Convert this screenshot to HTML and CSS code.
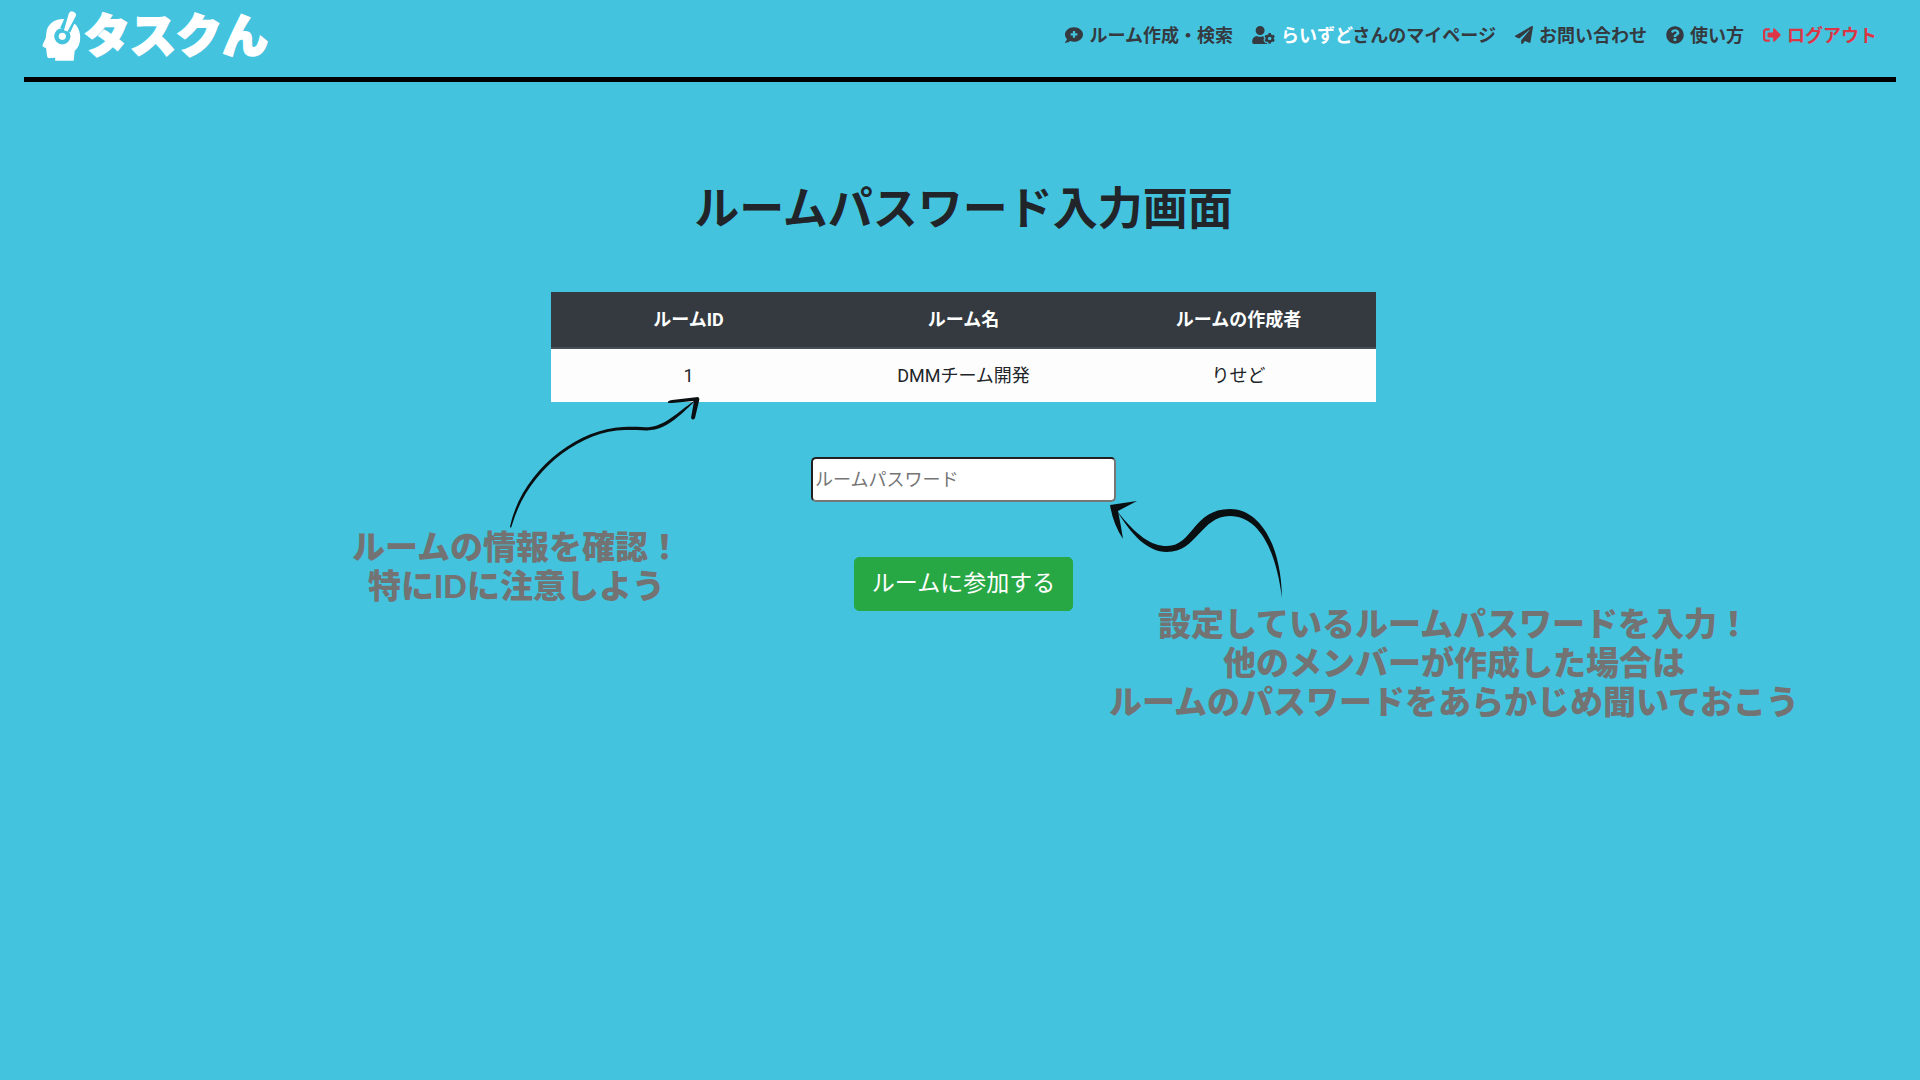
FILE: index.html
```html
<!DOCTYPE html>
<html lang="ja">
<head>
<meta charset="utf-8">
<meta name="viewport" content="width=device-width, initial-scale=1">
<title>タスくん</title>
<link rel="stylesheet" href="styles.css">
</head>
<body>
<header class="header">
  <a class="logo" href="#">
    <svg class="logo-mark" viewBox="126 30 120 160" aria-hidden="true">
      <path fill="#fff" d="M190 58C160 58 140 76 138 100L136 116L126 138Q125 143 132 145L137 147L140 172Q141 179 150 178L165 177V186H222L225 156Q243 140 242 112Q241 92 229 75Z"/>
      <circle class="logo-gap" cx="187" cy="111" r="25"/>
      <path class="logo-slit" d="M218 44L196 92"/>
      <circle cx="187" cy="111" r="11" fill="#fff"/>
      <path fill="#fff" d="M207 41Q211 31 221 35Q231 39 229 48L203 96L192 92Z"/>
    </svg>
    <span class="logo-text">タスクん</span>
  </a>
  <nav class="nav">
    <a class="nav-link" href="#">
      <svg class="icon" viewBox="0 0 512 512" aria-hidden="true"><path fill-rule="evenodd" d="M256 32C114.600 32 0 125.100 0 240c0 49.600 21.400 95 57 130.700C44.500 421.100 2.700 466 2.200 466.500c-2.200 2.300-2.800 5.700-1.500 8.700S4.800 480 8 480c66.300 0 116-31.800 140.600-51.400 32.700 12.300 69 19.400 107.400 19.400 141.400 0 256-93.100 256-208S397.400 32 256 32zM232 144h48q8 0 8 8v56h56q8 0 8 8v48q0 8-8 8h-56v56q0 8-8 8h-48q-8 0-8-8v-56h-56q-8 0-8-8v-48q0-8 8-8h56v-56q0-8 8-8z"/></svg>
      <span>ルーム作成・検索</span>
    </a>
    <a class="nav-link" href="#">
      <svg class="icon icon-wide" viewBox="0 0 640 512" aria-hidden="true"><path d="M610.500 373.300c2.600-14.100 2.600-28.500 0-42.600l25.800-14.900c3-1.700 4.300-5.200 3.300-8.500-6.700-21.600-18.200-41.200-33.200-57.400-2.300-2.500-6-3.100-9-1.400l-25.800 14.900c-10.900-9.300-23.400-16.500-36.900-21.300v-29.800c0-3.400-2.400-6.400-5.700-7.100-22.300-5-45-4.800-66.200 0-3.300.7-5.700 3.700-5.700 7.100v29.800c-13.500 4.800-26 12-36.900 21.300l-25.800-14.900c-2.900-1.700-6.700-1.100-9 1.400-15 16.200-26.500 35.800-33.200 57.400-1 3.300.4 6.800 3.300 8.500l25.800 14.900c-2.600 14.100-2.600 28.500 0 42.600l-25.800 14.900c-3 1.700-4.300 5.200-3.300 8.500 6.700 21.600 18.200 41.100 33.200 57.400 2.300 2.500 6 3.100 9 1.400l25.800-14.900c10.900 9.300 23.400 16.500 36.900 21.300v29.800c0 3.400 2.400 6.400 5.700 7.100 22.300 5 45 4.800 66.200 0 3.300-.7 5.700-3.700 5.700-7.100v-29.800c13.500-4.800 26-12 36.900-21.300l25.800 14.900c2.900 1.700 6.700 1.100 9-1.400 15-16.200 26.500-35.800 33.200-57.400 1-3.300-.4-6.800-3.300-8.500l-25.800-14.900zM496 400.500c-26.800 0-48.500-21.800-48.500-48.500s21.800-48.500 48.500-48.500 48.500 21.800 48.500 48.500-21.700 48.500-48.500 48.500zM224 256c70.700 0 128-57.300 128-128S294.700 0 224 0 96 57.300 96 128s57.300 128 128 128zm201.200 226.500c-2.300-1.200-4.600-2.600-6.800-3.900l-7.900 4.600c-6 3.400-12.800 5.300-19.600 5.300-10.900 0-21.400-4.600-28.900-12.600-18.300-19.800-32.300-43.900-40.200-69.600-5.500-17.700 1.900-36.400 17.900-45.700l7.900-4.600c-.1-2.600-.1-5.200 0-7.800l-7.900-4.600c-16-9.200-23.400-28-17.900-45.700.9-2.900 2.200-5.800 3.200-8.700-3.800-.3-7.500-1.200-11.400-1.200h-16.700c-22.200 10.200-46.900 16-72.900 16s-50.600-5.800-72.900-16h-16.700C60.200 288 0 348.200 0 422.400V464c0 26.500 21.500 48 48 48h352c10.100 0 19.500-3.200 27.200-8.500-1.200-3.800-2-7.700-2-11.800v-9.200z"/></svg>
      <span><span class="user-name">らいずど</span>さんのマイページ</span>
    </a>
    <a class="nav-link" href="#">
      <svg class="icon" viewBox="0 0 512 512" aria-hidden="true"><path d="M476 3.200L12.500 270.600c-18.100 10.400-15.800 35.600 2.200 43.200L121 358.400l287.300-253.200c5.500-4.900 13.300 2.600 8.600 8.300L176 407v80.500c0 23.600 28.500 32.900 42.500 15.800L282 426l124.600 52.200c14.200 6 30.400-2.900 33-18.200l72-432C515 7.800 493.300-6.800 476 3.200z"/></svg>
      <span>お問い合わせ</span>
    </a>
    <a class="nav-link" href="#">
      <svg class="icon" viewBox="0 0 512 512" aria-hidden="true"><path d="M504 256c0 136.997-111.043 248-248 248S8 392.997 8 256C8 119.083 119.043 8 256 8s248 111.083 248 248zM262.655 90c-54.497 0-89.255 22.957-116.549 63.758-3.536 5.286-2.353 12.415 2.715 16.258l34.699 26.310c5.205 3.947 12.621 3.008 16.665-2.122 17.864-22.658 30.113-35.797 57.303-35.797 20.429 0 45.698 13.148 45.698 32.958 0 14.976-12.363 22.667-32.534 33.976C247.128 238.528 216 254.941 216 296v4c0 6.627 5.373 12 12 12h56c6.627 0 12-5.373 12-12v-1.333c0-28.462 83.186-29.647 83.186-106.667 0-58.002-60.165-102-116.531-102zM256 338c-25.365 0-46 20.635-46 46 0 25.364 20.635 46 46 46s46-20.636 46-46c0-25.365-20.635-46-46-46z"/></svg>
      <span>使い方</span>
    </a>
    <a class="nav-link nav-link-logout" href="#">
      <svg class="icon" viewBox="0 0 512 512" aria-hidden="true"><path d="M497 273L329 441c-15 15-41 4.500-41-17v-96H152c-13.300 0-24-10.700-24-24v-96c0-13.300 10.700-24 24-24h136V88c0-21.400 25.900-32 41-17l168 168c9.300 9.400 9.300 24.600 0 34zM192 436v-40c0-6.600-5.400-12-12-12H96c-17.700 0-32-14.300-32-32V160c0-17.700 14.300-32 32-32h84c6.600 0 12-5.400 12-12V76c0-6.600-5.400-12-12-12H96c-53 0-96 43-96 96v192c0 53 43 96 96 96h84c6.600 0 12-5.400 12-12z"/></svg>
      <span>ログアウト</span>
    </a>
  </nav>
</header>

<main class="main">
  <h1 class="title">ルームパスワード入力画面</h1>
  <div class="room">
    <table class="room-table">
      <thead>
        <tr><th scope="col">ルームID</th><th scope="col">ルーム名</th><th scope="col">ルームの作成者</th></tr>
      </thead>
      <tbody>
        <tr><td>1</td><td>DMMチーム開発</td><td>りせど</td></tr>
      </tbody>
    </table>
    <form class="room-form">
      <input class="password" type="password" placeholder="ルームパスワード" aria-label="ルームパスワード">
      <button class="join" type="button">ルームに参加する</button>
    </form>

    <div class="callout callout-info">
      <svg class="arrow arrow-info" viewBox="0 0 200 133" aria-hidden="true">
        <path d="M5 132C16 78 70 34 118 32C134 31 142 33 145 32C162 30 176 14 192 4C178 18 162 34 146 35C142 36 134 35 120 35C72 36 22 78 7 130Q6 134 5 132Z"/>
        <path d="M163 8Q162 6 167 5L193 2Q195 3 194 6L190 23Q188 26 186 23L189 6L167 8Z"/>
      </svg>
      <p class="callout-text">ルームの情報を確認！<br>特にIDに注意しよう</p>
    </div>

    <div class="callout callout-password">
      <svg class="arrow arrow-password" viewBox="0 0 180 107" aria-hidden="true">
        <path d="M8 13C28 38 42 48 58 48C84 48 84 11 121 11C150 11 172 45 173 100C167 52 150 18 121 18C92 18 88 54 58 54C38 54 22 36 8 13Z"/>
        <path d="M1 7L28 3L9 13Q12 28 14 41Q4 26 1 7Z"/>
      </svg>
      <p class="callout-text">設定しているルームパスワードを入力！<br>他のメンバーが作成した場合は<br>ルームのパスワードをあらかじめ聞いておこう</p>
    </div>
  </div>
</main>
</body>
</html>
```
FILE: styles.css
```css
:root {
  --page: #44c3df;
  --ink: #212529;
  --dark: #343a40;
}

* {
  box-sizing: border-box;
}

body {
  display: flex;
  flex-direction: column;
  min-height: 100vh;
  margin: 0;
  background: var(--page);
  color: var(--ink);
  font-family: Roboto, "Noto Sans CJK JP", sans-serif;
  font-size: 18px;
  line-height: 27px;
}

.header {
  display: flex;
  align-items: center;
  justify-content: space-between;
  margin: 0 24px;
  padding: 10px 19px 15px 18px;
  border-bottom: 5px solid #000;
}

.logo {
  display: flex;
  align-items: center;
  gap: 2px;
  color: #fff;
  text-decoration: none;
}

.logo-mark {
  width: 40px;
  height: 52px;
}

.logo-gap {
  fill: var(--page);
}

.logo-slit {
  stroke: var(--page);
  stroke-width: 34px;
}

.logo-text {
  font-size: 46px;
  font-weight: 900;
  line-height: 52px;
  -webkit-text-stroke: 2px #fff;
  stroke-linejoin: round;
}

.nav {
  display: flex;
  gap: 19px;
  padding-bottom: 2px;
}

.nav-link {
  display: flex;
  align-items: center;
  gap: 6px;
  color: var(--dark);
  font-weight: 700;
  text-decoration: none;
  white-space: nowrap;
}

.nav-link-logout {
  color: #dc3545;
}

.user-name {
  color: #fff;
}

.icon {
  width: 18px;
  height: 18px;
  fill: currentColor;
}

.icon-wide {
  width: 23px;
}

.main {
  display: flex;
  flex: 1;
  flex-direction: column;
  align-items: center;
  padding: 101px 0 80px 7px;
}

.title {
  margin: 0 0 55px;
  font-size: 45px;
  font-weight: 700;
  line-height: 54px;
}

.room {
  position: relative;
  width: 100%;
  max-width: 825px;
}

.room-table {
  width: 100%;
  table-layout: fixed;
  border-collapse: collapse;
  text-align: center;
  background: #fdfdfd;
}

.room-table th {
  padding: 14px;
  background: var(--dark);
  border-bottom: 2px solid #454d55;
  color: #fff;
  font-weight: 700;
}

.room-table td {
  padding: 13px;
}

.room-form {
  display: flex;
  flex-direction: column;
  align-items: center;
  gap: 55px;
  padding-top: 55px;
}

.password {
  width: 305px;
  height: 45px;
  padding: 1px 2px;
  background: #fff;
  border: 2px inset #767676;
  border-radius: 5px;
  font: inherit;
}

.password::placeholder {
  color: #757575;
}

.join {
  padding: 10px 17px;
  background: #28a745;
  border: 1px solid #28a745;
  border-radius: 5px;
  color: #fff;
  font-family: inherit;
  font-size: 23px;
  line-height: 32px;
}

.callout {
  position: absolute;
  display: flex;
  flex-direction: column;
  align-items: flex-start;
}

.callout-info {
  top: 103px;
  right: calc(100% - 154px);
}

.callout-password {
  top: 206px;
  left: calc(100% - 267px);
}

.callout-text {
  margin: 0;
  color: #737373;
  font-family: "Liberation Sans", "Noto Sans CJK JP", sans-serif;
  font-size: 33px;
  font-weight: 900;
  line-height: 39px;
  text-align: center;
  white-space: nowrap;
}

.arrow {
  display: block;
  overflow: visible;
  fill: #0a0f12;
}

.arrow-info {
  width: 200px;
  height: 133px;
  margin-left: 153px;
}

.arrow-password {
  width: 180px;
  height: 107px;
}
```
